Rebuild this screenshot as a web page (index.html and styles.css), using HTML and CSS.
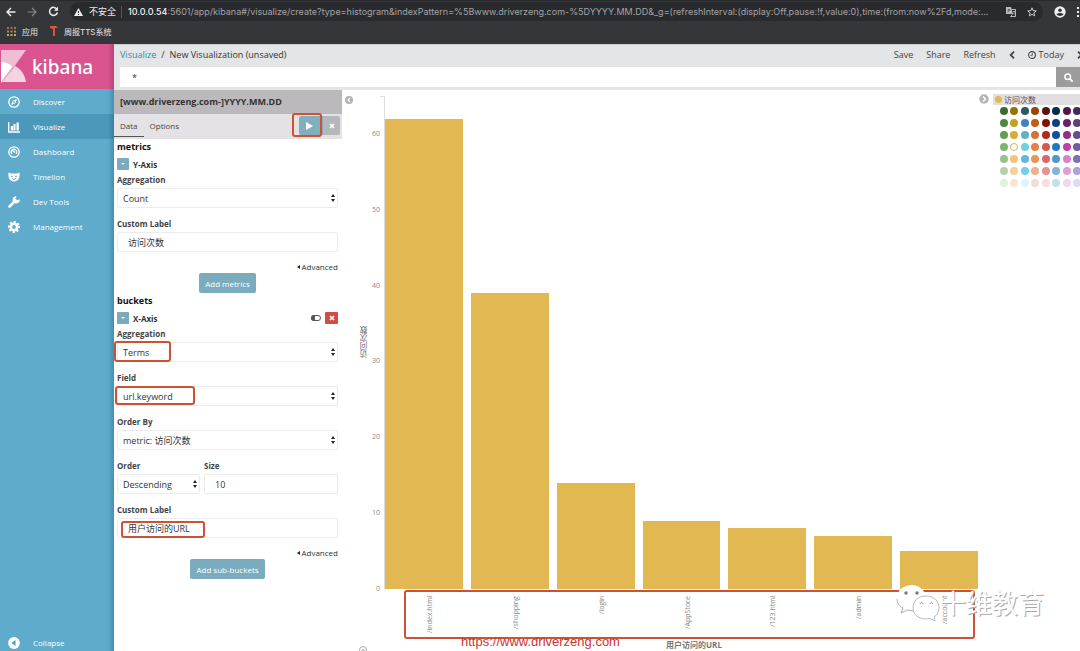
FILE: index.html
```html
<!DOCTYPE html>
<html lang="zh-CN">
<head>
<meta charset="utf-8">
<title>Kibana</title>
<link rel="stylesheet" href="styles.css">
</head>
<body>
<div class="browser">
  <div class="toolbar">
    <button class="chrome-btn" aria-label="Back"><svg width="10" height="10" viewBox="0 0 10 10"><path d="M9.500 5H1.500M5 1 1 5l4 4" fill="none" stroke="#eee" stroke-width="1.400"/></svg></button>
    <button class="chrome-btn" aria-label="Forward"><svg width="10" height="10" viewBox="0 0 10 10"><path d="M.5 5h8M5 1l4 4-4 4" fill="none" stroke="#85868a" stroke-width="1.200"/></svg></button>
    <button class="chrome-btn" aria-label="Reload"><svg width="11" height="11" viewBox="0 0 11 11"><path d="M9 3.300A4 4 0 1 0 9.400 6.500" fill="none" stroke="#eee" stroke-width="1.500"/><path d="M10 .7v4H6z" fill="#eee"/></svg></button>
    <div class="address">
      <svg width="9" height="8" viewBox="0 0 9 8"><path d="M4.500 0 9 8H0z" fill="#eee"/><path d="M4.500 3v2M4.500 6v1" stroke="#292a2d"/></svg>
      <span class="insecure">不安全</span>
      <span class="url"><b>10.0.0.54</b>:5601/app/kibana#/visualize/create?type=histogram&amp;indexPattern=%5Bwww.driverzeng.com-%5DYYYY.MM.DD&amp;_g=(refreshInterval:(display:Off,pause:!f,value:0),time:(from:now%2Fd,mode:...</span>
      <button class="chrome-btn" aria-label="Translate"><svg width="10" height="10" viewBox="0 0 10 10"><path d="M0 0h5l2 7H0z" fill="#bbb"/><path d="M5.500 2.500h4v7H4.500l2-2" fill="none" stroke="#bbb"/><path d="M1.500 3h3M3 2v1c0 1-1 2-1.500 2" stroke="#333" stroke-width=".7" fill="none"/><path d="M7 4.500h2M8 4v4" stroke="#bbb" stroke-width=".7"/></svg></button>
      <button class="chrome-btn" aria-label="Bookmark"><svg width="10" height="10" viewBox="0 0 10 10"><path d="M5 .8 6.200 3.700l3.100.2-2.400 2 .8 3L5 7.300 2.300 8.900l.8-3-2.400-2 3.100-.2z" fill="none" stroke="#ccc"/></svg></button>
    </div>
    <button class="chrome-btn" aria-label="Profile"><svg width="12" height="12" viewBox="0 0 12 12"><circle cx="6" cy="6" r="5.700" fill="#eee"/><circle cx="6" cy="4.200" r="1.800" fill="#35363a"/><path d="M2.500 8.600C3.500 6.600 8.500 6.600 9.500 8.600 8 10.500 4 10.500 2.500 8.600z" fill="#35363a"/></svg></button>
    <button class="chrome-btn" aria-label="Menu"><svg width="3" height="10" viewBox="0 0 3 10"><path d="M0 0h2v2H0zM0 4h2v2H0zM0 8h2v2H0z" fill="#eee"/></svg></button>
  </div>
  <div class="bookmarks">
    <a href="#"><svg width="9" height="9" viewBox="0 0 9 9"><path d="M0 1h9" stroke="#c65f4c" stroke-width="2" stroke-dasharray="2 1.500"/><path d="M0 4.500h9" stroke="#7fa071" stroke-width="2" stroke-dasharray="2 1.500"/><path d="M0 8h9" stroke="#d3a94e" stroke-width="2" stroke-dasharray="2 1.500"/></svg>应用</a>
    <a href="#"><svg width="8" height="10" viewBox="0 0 8 10"><path d="M0 0h6l2 2H5v8H3V3L0 2z" fill="#d9553f"/></svg>周报TTS系统</a>
  </div>
</div>

<div class="app">
  <nav class="sidebar">
    <a class="logo" href="#">
      <svg width="27" height="33" viewBox="0 0 27 33"><path d="M1 0h25L14 17 1 32z" fill="#f1bdd5"/><path d="M1 12c5 0 9 2 12 5L1 33z" fill="#fff"/><path d="M1 32 15 16c6 3 10 9 11 16z" fill="#f7d3e2"/><path d="M1 32 13 16l2 1L4 30z" fill="#e8a6c4"/></svg>
      <span>kibana</span>
    </a>
    <a class="nav" href="#"><svg viewBox="0 0 12 12"><circle cx="6" cy="6" r="5.200" fill="none" stroke="#fff" stroke-width="1.300"/><path d="M9 3 7.300 7.300 3 9l1.700-4.300z" fill="#fff"/><circle cx="6" cy="6" r=".9" fill="#5eabcc"/></svg>Discover</a>
    <a class="nav active" href="#"><svg viewBox="0 0 12 12"><path d="M.7 1v10H12" fill="none" stroke="#fff" stroke-width="1.300"/><path d="M2.800 5H5v4.500H2.800zM5.500 3h2v6.500h-2zM8.500 1.500h2.300v8H8.500z" fill="#fff"/></svg>Visualize</a>
    <a class="nav" href="#"><svg viewBox="0 0 12 12"><circle cx="6" cy="6" r="5.200" fill="none" stroke="#fff" stroke-width="1.300"/><circle cx="6" cy="6" r="2.800" fill="none" stroke="#fff" stroke-width="1.200" stroke-dasharray="13 5" transform="rotate(130 6 6)"/><path d="m4 4 3 2.500" stroke="#fff" stroke-width="1.500"/></svg>Dashboard</a>
    <a class="nav" href="#"><svg viewBox="0 0 12 12"><path d="M.5 1.500 3 2.500h6l2.500-1C12 7 10.500 10.500 6 10.500S0 7 .5 1.500z" fill="#fff"/><path d="M3 5.300h2M7 5.300h2M4 7.500l2 1 2-1" fill="none" stroke="#5eabcc"/></svg>Timelion</a>
    <a class="nav" href="#"><svg viewBox="0 0 12 12"><path d="M1.500 10.500 7 5" stroke="#fff" stroke-width="2.600" stroke-linecap="round"/><path d="M11.800 3.200A3.600 3.600 0 1 1 8.600.2L7.300 2.500l2 1.800z" fill="#fff"/></svg>Dev Tools</a>
    <a class="nav" href="#"><svg viewBox="0 0 12 12"><circle cx="6" cy="6" r="3.200" fill="none" stroke="#fff" stroke-width="2.600"/><circle cx="6" cy="6" r="5" fill="none" stroke="#fff" stroke-width="2" stroke-dasharray="2 1.930" transform="rotate(-11 6 6)"/></svg>Management</a>
    <a class="nav collapse" href="#"><svg viewBox="0 0 12 12"><circle cx="6" cy="6" r="5.900" fill="#fff"/><path d="M7.500 3v6L3.500 6z" fill="#4c9cc0"/></svg>Collapse</a>
  </nav>

  <main class="main">
    <header class="top">
      <div class="crumbs">
        <div class="path"><a href="#">Visualize</a><span>/</span><span>New Visualization (unsaved)</span></div>
        <div class="menu">
          <button>Save</button><button>Share</button><button>Refresh</button>
          <button aria-label="Earlier"><svg width="6" height="8" viewBox="0 0 6 8"><path d="M5 .7 1.700 4 5 7.300" fill="none" stroke="#444" stroke-width="1.800"/></svg></button>
          <button><svg width="8" height="8" viewBox="0 0 8 8"><circle cx="4" cy="4" r="3.400" fill="none" stroke="#444" stroke-width="1.100"/><path d="M4.300 2v2.400H2.500" fill="none" stroke="#444" stroke-width=".8"/></svg> Today</button>
          <button aria-label="Later"><svg width="6" height="8" viewBox="0 0 6 8"><path d="m1 .7 3.300 3.300L1 7.300" fill="none" stroke="#444" stroke-width="1.800"/></svg></button>
        </div>
      </div>
      <form class="query">
        <input type="text" value="*" aria-label="Search query">
        <button type="button" aria-label="Search"><svg width="9" height="9" viewBox="0 0 9 9"><circle cx="3.700" cy="3.700" r="2.800" fill="none" stroke="#fff" stroke-width="1.500"/><path d="m5.700 5.700 3 3" stroke="#fff" stroke-width="1.800"/></svg></button>
      </form>
    </header>

    <div class="content">
      <section class="editor">
        <h1>[www.driverzeng.com-]YYYY.MM.DD</h1>
        <div class="tabs">
          <button class="tab on">Data</button><button class="tab">Options</button>
          <div class="actions">
            <button class="apply" aria-label="Apply changes"><svg width="7" height="8" viewBox="0 0 7 8"><path d="M0 0v8l7-4z" fill="#fff"/></svg></button>
            <button class="discard" aria-label="Discard changes"><svg width="6" height="6" viewBox="0 0 6 6"><path d="m1 1 4 4M5 1 1 5" stroke="#fff" stroke-width="1.700"/></svg></button>
            <i class="mark mark-apply"></i>
          </div>
        </div>
        <form class="aggs">
          <h2>metrics</h2>
          <div class="agg"><button type="button" class="toggle" aria-label="Toggle Y-Axis"></button><b>Y-Axis</b></div>
          <div class="field"><label for="m-agg">Aggregation</label><div class="pick"><select id="m-agg"><option>Count</option></select></div></div>
          <div class="field"><label for="m-label">Custom Label</label><input id="m-label" type="text" value="访问次数"></div>
          <button type="button" class="advanced">Advanced</button>
          <button type="button" class="add">Add metrics</button>

          <h2>buckets</h2>
          <div class="agg"><button type="button" class="toggle" aria-label="Toggle X-Axis"></button><b>X-Axis</b>
            <button type="button" class="switch" aria-label="Disable aggregation"><svg width="10" height="6" viewBox="0 0 10 6"><rect x=".5" y=".5" width="9" height="5" rx="2.500" fill="#fff" stroke="#555"/><path d="M5 0H3a3 3 0 0 0 0 6h2C3.500 5 3.500 1 5 0z" fill="#555"/></svg></button>
            <button type="button" class="remove" aria-label="Remove aggregation"><svg width="6" height="6" viewBox="0 0 6 6"><path d="m1 1 4 4M5 1 1 5" stroke="#fff" stroke-width="1.700"/></svg></button>
          </div>
          <div class="field"><label for="b-agg">Aggregation</label><div class="pick"><select id="b-agg"><option>Terms</option></select><i class="mark mark-terms"></i></div></div>
          <div class="field"><label for="b-field">Field</label><div class="pick"><select id="b-field"><option>url.keyword</option></select><i class="mark mark-field"></i></div></div>
          <div class="field"><label for="b-by">Order By</label><div class="pick"><select id="b-by"><option>metric: 访问次数</option></select></div></div>
          <div class="pair">
            <div class="field order"><label for="b-order">Order</label><div class="pick"><select id="b-order"><option>Descending</option></select></div></div>
            <div class="field size"><label for="b-size">Size</label><input id="b-size" type="text" value="10"></div>
          </div>
          <div class="field"><label for="b-label">Custom Label</label><div class="wrap"><input id="b-label" type="text" value="用户访问的URL"><i class="mark mark-label"></i></div></div>
          <button type="button" class="advanced">Advanced</button>
          <button type="button" class="add">Add sub-buckets</button>
        </form>
      </section>

      <section class="vis">
        <div class="rail">
          <button aria-label="Collapse editor"><svg width="8" height="8" viewBox="0 0 8 8"><circle cx="4" cy="4" r="4" fill="#b3b3b3"/><path d="M5 2 3 4l2 2" fill="none" stroke="#fff" stroke-width="1.200"/></svg></button>
        </div>
        <div class="ytitle"><span>访问次数</span>
          <button class="spy" aria-label="Show table"><svg width="8" height="8" viewBox="0 0 8 8"><circle cx="4" cy="4" r="3.500" fill="none" stroke="#aaa"/><path d="m2.500 5 1.500-2 1.500 2" fill="none" stroke="#aaa"/></svg></button>
        </div>
        <div class="yaxis"><span style="bottom:92.300%">60</span><span style="bottom:76.900%">50</span><span style="bottom:61.500%">40</span><span style="bottom:46.200%">30</span><span style="bottom:30.800%">20</span><span style="bottom:15.400%">10</span><span style="bottom:0%">0</span></div>
        <div class="chart">
          <div class="bars">
            <div style="height:95.400%"></div><div style="height:60%"></div><div style="height:21.500%"></div><div style="height:13.800%"></div><div style="height:12.300%"></div><div style="height:10.800%"></div><div style="height:7.700%"></div>
          </div>
          <div class="xaxis">
            <span>/index.html</span><span>/shopping</span><span>/login</span><span>/AppStore</span><span>/123.html</span><span>/admin</span><span>/account</span>
            <i class="mark mark-axis"></i>
          </div>
          <div class="xtitle">用户访问的URL</div>
          <div class="site">https://www.driverzeng.com</div>
          <div class="brand">
            <svg width="44" height="38" viewBox="0 0 44 38"><path d="M16 1C8 1 1 6 1 14c0 4 2 8 6 10l-2 5 6-3 6 1c-2-8 3-14 13-14C29 6 23 1 16 1z" fill="#fff"/><path d="M1 15c0 4 2 7 6 9l-2 5 6-3 6 1" fill="none" stroke="#999" stroke-width=".8"/><path d="M30 12c-8 0-13 5-13 12 0 6 5 11 13 11l4-.6 5 2.600-1-4c3-2 5-5 5-9 0-7-5-12-13-12z" fill="#fff" stroke="#aaa" stroke-width=".8"/><g fill="#777"><circle cx="10" cy="9" r="1.700"/><circle cx="21" cy="9" r="1.700"/></g><path d="M24 20c1-2 2-2 3 0M34 20c1-2 2-2 3 0" fill="none" stroke="#888"/></svg>
            <span>十维教育</span>
          </div>
        </div>
        <aside class="legend">
          <button class="hide" aria-label="Hide legend"><svg width="10" height="10" viewBox="0 0 10 10"><circle cx="5" cy="5" r="4.700" fill="#b3b3b3"/><path d="m4 2.500 2.500 2.500L4 7.500" fill="none" stroke="#fff" stroke-width="1.500"/></svg></button>
          <div class="panel">
            <div class="series"><i></i>访问次数</div>
            <div class="palette">
              <i style="background:#3f6833"></i><i style="background:#967302"></i><i style="background:#2f575e"></i><i style="background:#99440a"></i><i style="background:#58140c"></i><i style="background:#052b51"></i><i style="background:#511749"></i><i style="background:#3f2b5b"></i>
              <i style="background:#508642"></i><i style="background:#c4a024"></i><i style="background:#447ebc"></i><i style="background:#c15c17"></i><i style="background:#890f02"></i><i style="background:#0a437c"></i><i style="background:#6d1f62"></i><i style="background:#584477"></i>
              <i style="background:#629e51"></i><i style="background:#dcab30"></i><i style="background:#64b0c8"></i><i style="background:#d0753d"></i><i style="background:#b02a18"></i><i style="background:#0a50a1"></i><i style="background:#962d82"></i><i style="background:#614d93"></i>
              <i style="background:#7eb26d"></i><i class="picked"></i><i style="background:#6ed0e0"></i><i style="background:#e5804a"></i><i style="background:#d45a4e"></i><i style="background:#1f78c1"></i><i style="background:#ba43a9"></i><i style="background:#705da0"></i>
              <i style="background:#9abf90"></i><i style="background:#efc673"></i><i style="background:#65b5db"></i><i style="background:#e99355"></i><i style="background:#d8686a"></i><i style="background:#5195ce"></i><i style="background:#d683ce"></i><i style="background:#806eb7"></i>
              <i style="background:#b7d0ab"></i><i style="background:#f4d09a"></i><i style="background:#70d0ed"></i><i style="background:#efb08f"></i><i style="background:#e69191"></i><i style="background:#82b5d8"></i><i style="background:#dfa0da"></i><i style="background:#aea2e0"></i>
              <i style="background:#e0f2d7"></i><i style="background:#fae4cc"></i><i style="background:#dcf5ff"></i><i style="background:#f3dcd2"></i><i style="background:#f8dedc"></i><i style="background:#c6dff0"></i><i style="background:#f0d6f0"></i><i style="background:#dedaf7"></i>
            </div>
          </div>
        </aside>
      </section>
    </div>
  </main>
</div>
</body>
</html>
```
FILE: styles.css
```css
* { box-sizing: border-box; }
body {
  margin: 0;
  height: 100vh;
  display: flex;
  flex-direction: column;
  overflow: hidden;
  background: #fff;
  color: #333;
  font-family: "Open Sans", "Noto Sans CJK SC", sans-serif;
  font-size: 9px;
}
button { border: 0; padding: 0; margin: 0; background: none; font: inherit; color: inherit; display: inline-flex; align-items: center; justify-content: center; }
input, select { font: inherit; color: inherit; border-radius: 2px; }
a { color: inherit; text-decoration: none; }
svg { display: block; flex: none; }
h1, h2 { margin: 0; }

/* Browser chrome */
.browser { background: #35363a; color: #e8e8e8; height: 44px; flex: none; font-family: Inter, "Noto Sans CJK SC", sans-serif; }
.toolbar { display: flex; align-items: center; height: 22px; padding-left: 6px; gap: 11px; border-top: 1px solid #28292c; }
.address { flex: 1; min-width: 0; display: flex; align-items: center; gap: 6px; height: 19px; padding: 0 6px 0 4px; background: #292a2d; border-radius: 10px; }
.insecure { padding-right: 5px; border-right: 1px solid #55565a; line-height: 12px; white-space: nowrap; }
.url { flex: 1; min-width: 0; overflow: hidden; white-space: nowrap; color: #a2a3a6; }
.url b { font-weight: 500; color: #f1f1f1; }
.address .chrome-btn { margin-left: 5px; }
.bookmarks { display: flex; gap: 12px; padding-left: 7px; height: 18px; align-items: center; font-size: 8px; }
.bookmarks a { display: flex; align-items: center; gap: 6px; }

.app { flex: 1; min-height: 0; display: flex; }

/* Sidebar */
.sidebar { width: 114px; flex: none; display: flex; flex-direction: column; background: linear-gradient(to right, #5eabcc 108px, #438fb0); color: #fff; }
.logo { display: flex; align-items: center; gap: 5px; height: 45px; background: linear-gradient(to right, #da5590 108px, #bb4378); font-family: "Noto Sans", sans-serif; font-size: 19px; font-weight: 500; }
.nav { display: flex; align-items: center; gap: 13px; height: 25px; padding-left: 8px; font-size: 8px; }
.nav svg { width: 12px; height: 12px; }
.nav.active { background: linear-gradient(to right, #4c98ba 108px, #387f9f); }
.collapse { margin-top: auto; margin-bottom: -4px; }

/* Header */
.main { flex: 1; min-width: 0; display: flex; flex-direction: column; }
.top { background: #e4e5e6; padding-bottom: 3px; flex: none; box-shadow: inset 0 1px #cfcfd0; }
.crumbs { display: flex; justify-content: space-between; align-items: center; height: 23px; padding: 0 0 2px 6px; overflow: hidden; }
.path, .menu { display: flex; align-items: center; white-space: nowrap; }
.path { gap: 5px; }
.path a { color: #328caa; }
.menu { gap: 13px; margin-right: -3px; color: #444; }
.menu button { gap: 3px; }
.query { display: flex; height: 20px; padding-left: 6px; }
.query input { flex: 1; min-width: 0; border: 0; padding: 0 12px; border-radius: 0; background: #fff; }
.query button { width: 24px; background: #9c9c9c; }

.content { flex: 1; min-height: 0; display: flex; }

/* Editor */
.editor { width: 228px; flex: none; }
.editor h1 { height: 24px; padding-left: 6px; line-height: 24px; font-size: 9px; background: #bbb9bb; }
.tabs { display: flex; height: 25px; background: #e4e2e4; color: #444; font-size: 8px; }
.tab { padding: 0 6px; height: 23px; border-bottom: 1px solid transparent; }
.tab.on { border-color: #555; }
.actions { display: flex; align-items: center; margin-left: auto; padding: 0 2px 2px 0; position: relative; }
.apply { width: 24px; height: 19px; padding-right: 4px; background: #82afbe; border-radius: 2px 0 0 2px; }
.discard { width: 17px; height: 19px; background: #b3b9bb; border-radius: 0 2px 2px 0; }
.aggs { display: flex; flex-direction: column; padding: 0 4px 0 3px; }
.aggs h2 { font-size: 9px; line-height: 16px; color: #111; }
.agg { display: flex; align-items: center; gap: 4px; height: 14px; margin: 2px 0 1px; font-size: 8px; }
.toggle { width: 12px; height: 12px; border-radius: 1px; background: #7aacbd; }
.toggle::after { content: ""; border: 2px solid transparent; border-top-color: #fff; border-bottom: 0; }
.switch { margin-left: auto; }
.remove { width: 13px; height: 12px; background: #cf4d44; border-radius: 1px; }
.field { display: flex; flex-direction: column; margin-bottom: 8px; }
.field label { font-size: 8px; font-weight: 700; line-height: 16px; color: #444; }
.field input, .field select { display: block; width: 100%; height: 20px; border: 1px solid #ececec; background: #fff; }
.field input { padding: 0 10px; }
.field select { appearance: none; padding: 0 5px; }
.pick, .wrap { position: relative; }
.pick::before, .pick::after { content: ""; position: absolute; right: 3px; border: 2px solid transparent; }
.pick::before { top: 6px; border-top: 0; border-bottom: 3px solid #222; }
.pick::after { bottom: 6px; border-bottom: 0; border-top: 3px solid #222; }
.pair { display: flex; gap: 4px; }
.order { width: 83px; }
.size { flex: 1; min-width: 0; }
.advanced { align-self: flex-end; height: 13px; font-size: 8px; gap: 1px; }
.advanced::before { content: ""; border: 2px solid transparent; border-right: 3px solid #222; border-left: 0; }
.add { align-self: center; height: 20px; padding: 0 6px; border-radius: 2px; background: #7aacbd; color: #fff; font-size: 8px; }

/* Red annotation frames */
.mark { position: absolute; border: 2px solid #cd5234; border-radius: 3px; pointer-events: none; }
.mark-apply { left: -7px; top: -1px; width: 30px; height: 24px; }
.mark-terms { left: -3px; top: -1px; width: 57px; height: 21px; }
.mark-field { left: -2px; top: 0; width: 80px; height: 19px; }
.mark-label { left: 4px; top: 3px; width: 84px; height: 17px; }

/* Visualization */
.vis { flex: 1; min-width: 0; display: flex; font-size: 7px; color: #888; }
.rail { width: 14px; padding: 6px 0 0 3px; }
.ytitle { width: 14px; position: relative; display: flex; align-items: center; justify-content: center; padding-bottom: 58px; color: #666; font-size: 8px; }
.ytitle span { writing-mode: vertical-rl; transform: rotate(180deg); }
.spy { position: absolute; left: 3px; bottom: -3px; }
.yaxis { width: 15px; position: relative; margin: 6px 0 62px; border-right: 1px solid #ddd; }
.yaxis::before { content: ""; position: absolute; top: 0; right: 0; width: 4px; border-top: 1px solid #ddd; }
.yaxis span { position: absolute; right: 4px; line-height: 10px; transform: translateY(50%); }
.chart { flex: 1; min-width: 0; display: flex; flex-direction: column; padding-top: 6px; position: relative; }
.bars { flex: 1; min-height: 0; display: flex; align-items: flex-end; gap: 8px; }
.bars div { flex: 1; background: #e1b852; }
.xaxis { position: relative; display: flex; gap: 8px; height: 49px; padding-top: 7px; }
.xaxis span { flex: 1; writing-mode: vertical-rl; transform: rotate(180deg); display: flex; align-items: center; justify-content: flex-end; line-height: 10px; padding-right: 12px; }
.mark-axis { left: 19px; right: 3px; top: 1px; height: 49px; }
.xtitle { height: 13px; line-height: 13px; padding-left: 25px; text-align: center; font-size: 8px; font-weight: 700; color: #777; }
.site { position: absolute; left: 76px; bottom: 2px; font: 13px/14px "Liberation Sans", sans-serif; color: #d32f35; }
.brand { position: absolute; right: -66px; bottom: 29px; display: flex; align-items: center; gap: 0; color: #fff; font-size: 26px; line-height: 38px; white-space: nowrap; text-shadow: 1px 1px 0 #aaa; z-index: 1; }
.legend { width: 102px; flex: none; display: flex; align-items: flex-start; overflow: hidden; padding-top: 4px; }
.hide { margin-left: 1px; margin-right: 4px; }
.panel { flex: none; width: 88px; }
.series { display: flex; align-items: center; gap: 2px; height: 11px; padding-left: 2px; background: #e2dfe0; color: #555; font-size: 8px; }
.series i { width: 7px; height: 7px; border-radius: 50%; background: #e1b852; }
.palette { display: grid; grid-template-columns: repeat(8, 8px); justify-content: space-between; row-gap: 4px; padding: 2px 0 0 7px; }
.palette i { width: 8px; height: 8px; border-radius: 50%; }
.palette .picked { border: 1px solid #d9b65b; background: #fff; }
```
